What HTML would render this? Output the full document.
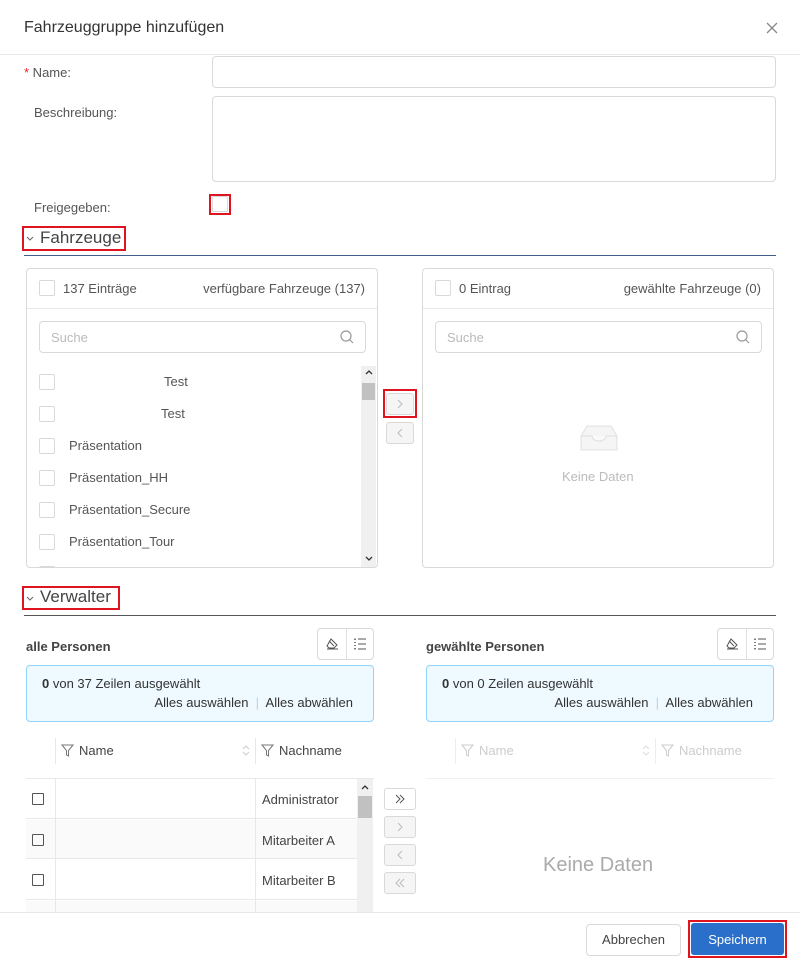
<!DOCTYPE html>
<html><head><meta charset="utf-8"><style>
*{box-sizing:border-box;margin:0;padding:0}
body{width:800px;height:964px;position:relative;background:#fff;font-family:"Liberation Sans",sans-serif;font-size:13px;color:#555;overflow:hidden}
.a{position:absolute}
.box{position:absolute;border:1px solid #d9d9d9;border-radius:4px;background:#fff}
.cb{position:absolute;width:16px;height:16px;border:1px solid #d9d9d9;border-radius:2px;background:#fff}
.red{position:absolute;border:2px solid #e0141e}
.btn{position:absolute;border:1px solid #d9d9d9;border-radius:3px;background:#f5f5f5}
.btn svg{position:absolute;left:50%;top:50%;transform:translate(-50%,-50%)}
.t{position:absolute;white-space:nowrap}
.info{position:absolute;background:#eefaff;border:1px solid #91d5ff;border-radius:4px}
.sq{position:absolute;width:12px;height:12px;border:1px solid #555;border-radius:1px}
</style></head><body>
<div class="t" style="left:24px;top:19px;font-size:16px;color:#333">Fahrzeuggruppe hinzufügen</div>
<svg class="a" style="left:766px;top:22px" width="12" height="12" viewBox="0 0 12 12"><path d="M1 1L11 11M11 1L1 11" stroke="#888" stroke-width="1.3"/></svg>
<div class="a" style="left:0;top:54px;width:800px;height:1px;background:#e8e8e8"></div>

<div class="t" style="left:24px;top:65px"><span style="color:#f5222d">*</span> Name:</div>
<div class="box" style="left:212px;top:56px;width:564px;height:32px"></div>
<div class="t" style="left:34px;top:105px">Beschreibung:</div>
<div class="box" style="left:212px;top:96px;width:564px;height:86px"></div>
<div class="t" style="left:34px;top:200px">Freigegeben:</div>
<div class="cb" style="left:212px;top:196px"></div>
<div class="red" style="left:209px;top:194px;width:22px;height:21px"></div>

<svg class="a" style="left:26px;top:236px" width="8" height="6" viewBox="0 0 8 6"><path d="M1 1L4 4L7 1" fill="none" stroke="#666"/></svg>
<div class="t" style="left:40px;top:228px;font-size:17px;color:#444">Fahrzeuge</div>
<div class="red" style="left:22px;top:226px;width:104px;height:25px"></div>
<div class="a" style="left:24px;top:255px;width:752px;height:1px;background:#3f5f8a"></div>

<!-- left transfer -->
<div class="box" style="left:26px;top:268px;width:352px;height:300px;overflow:hidden">
<div class="a" style="left:0;top:39px;width:352px;height:1px;background:#e8e8e8"></div>
<div class="cb" style="left:12px;top:11px"></div>
<div class="t" style="left:36px;top:12px">137 Einträge</div>
<div class="t" style="right:12px;top:12px">verfügbare Fahrzeuge (137)</div>
<div class="box" style="left:12px;top:52px;width:327px;height:32px"></div>
<div class="t" style="left:24px;top:61px;color:#bbb">Suche</div>
<svg class="a" style="left:313px;top:61px" width="14" height="14" viewBox="0 0 14 14"><circle cx="6" cy="6" r="5" fill="none" stroke="#999" stroke-width="1.2"/><line x1="9.5" y1="9.5" x2="13" y2="13" stroke="#999" stroke-width="1.2"/></svg>
<div class="cb" style="left:12px;top:105px"></div><div class="t" style="left:137px;top:105px">Test</div>
<div class="cb" style="left:12px;top:137px"></div><div class="t" style="left:134px;top:137px">Test</div>
<div class="cb" style="left:12px;top:169px"></div><div class="t" style="left:42px;top:169px">Präsentation</div>
<div class="cb" style="left:12px;top:201px"></div><div class="t" style="left:42px;top:201px">Präsentation_HH</div>
<div class="cb" style="left:12px;top:233px"></div><div class="t" style="left:42px;top:233px">Präsentation_Secure</div>
<div class="cb" style="left:12px;top:265px"></div><div class="t" style="left:42px;top:265px">Präsentation_Tour</div>
<div class="cb" style="left:12px;top:297px"></div>
<div class="a" style="left:334px;top:97px;width:15px;height:202px;background:#f0f0f0"></div>
<div class="a" style="left:335px;top:114px;width:13px;height:17px;background:#c1c1c1"></div>
<svg class="a" style="left:338px;top:100px" width="8" height="6" viewBox="0 0 8 6"><path d="M1 5L4 2L7 5" fill="none" stroke="#333" stroke-width="1.3"/></svg>
<svg class="a" style="left:338px;top:287px" width="8" height="6" viewBox="0 0 8 6"><path d="M1 1L4 4L7 1" fill="none" stroke="#333" stroke-width="1.3"/></svg>
</div>
<div class="btn" style="left:386px;top:393px;width:28px;height:22px"><svg width="6" height="10" viewBox="0 0 6 10"><path d="M1 1L5 5L1 9" fill="none" stroke="#bbb"/></svg></div>
<div class="red" style="left:383px;top:389px;width:34px;height:29px"></div>
<div class="btn" style="left:386px;top:422px;width:28px;height:22px"><svg width="6" height="10" viewBox="0 0 6 10"><path d="M5 1L1 5L5 9" fill="none" stroke="#bbb"/></svg></div>

<div class="box" style="left:422px;top:268px;width:352px;height:300px">
<div class="a" style="left:0;top:39px;width:350px;height:1px;background:#e8e8e8"></div>
<div class="cb" style="left:12px;top:11px"></div>
<div class="t" style="left:36px;top:12px">0 Eintrag</div>
<div class="t" style="right:12px;top:12px">gewählte Fahrzeuge (0)</div>
<div class="box" style="left:12px;top:52px;width:327px;height:32px"></div>
<div class="t" style="left:24px;top:61px;color:#bbb">Suche</div>
<svg class="a" style="left:313px;top:61px" width="14" height="14" viewBox="0 0 14 14"><circle cx="6" cy="6" r="5" fill="none" stroke="#999" stroke-width="1.2"/><line x1="9.5" y1="9.5" x2="13" y2="13" stroke="#999" stroke-width="1.2"/></svg>
<svg class="a" style="left:154px;top:154px" width="44" height="30" viewBox="0 0 44 30"><path d="M4 13 L10 3 H34 L40 13 V27 H4 Z" fill="#f5f5f5" stroke="#e0e0e0"/><path d="M4 13 H15 Q16 18 22 18 Q28 18 29 13 H40" fill="#fafafa" stroke="#e0e0e0"/></svg>
<div class="t" style="left:139px;top:200px;color:#bbb">Keine Daten</div>
</div>

<svg class="a" style="left:26px;top:596px" width="8" height="6" viewBox="0 0 8 6"><path d="M1 1L4 4L7 1" fill="none" stroke="#666"/></svg>
<div class="t" style="left:40px;top:587px;font-size:17px;color:#444">Verwalter</div>
<div class="red" style="left:22px;top:586px;width:98px;height:24px"></div>
<div class="a" style="left:24px;top:615px;width:752px;height:1px;background:#555"></div>

<!-- left persons -->
<div class="t" style="left:26px;top:639px;font-weight:bold;color:#444">alle Personen</div>
<div class="box" style="left:317px;top:628px;width:57px;height:32px"><div class="a" style="left:28px;top:0;width:1px;height:30px;background:#e0e0e0"></div>
<svg class="a" style="left:8px;top:9px" width="13" height="12" viewBox="0 0 13 12"><path d="M5 1L11 7L8 10H3L1 8Z M1 11H12" fill="none" stroke="#555"/><path d="M3 3L8 8" stroke="#555"/></svg>
<svg class="a" style="left:36px;top:9px" width="13" height="12" viewBox="0 0 13 12"><path d="M4 1H12M4 6H12M4 11H12" stroke="#555"/><path d="M1 0.5V2M1 4V5M1 7V8M1 10V11.5" stroke="#555" stroke-width="1.5"/></svg></div>
<div class="info" style="left:26px;top:665px;width:348px;height:57px"><div class="t" style="left:15px;top:10px;color:#333"><b>0</b> von 37 Zeilen ausgewählt</div><div class="t" style="right:20px;top:29px;color:#333">Alles auswählen <span style="color:#ccc">&nbsp;|&nbsp;</span> Alles abwählen</div></div>
<div class="a" style="left:55px;top:738px;width:1px;height:26px;background:#e8e8e8"></div>
<div class="a" style="left:255px;top:738px;width:1px;height:26px;background:#e8e8e8"></div>
<svg class="a" style="left:61px;top:744px" width="13" height="13" viewBox="0 0 13 13"><path d="M1 1H12L7.5 6.5V12L5.5 11V6.5Z" fill="none" stroke="#777"/></svg>
<div class="t" style="left:79px;top:743px;color:#444">Name</div>
<svg class="a" style="left:242px;top:744px" width="8" height="13" viewBox="0 0 8 13"><path d="M1 5L4 2L7 5M1 8L4 11L7 8" fill="none" stroke="#ccc"/></svg>
<svg class="a" style="left:261px;top:744px" width="13" height="13" viewBox="0 0 13 13"><path d="M1 1H12L7.5 6.5V12L5.5 11V6.5Z" fill="none" stroke="#777"/></svg>
<div class="t" style="left:279px;top:743px;color:#444">Nachname</div>
<div class="a" style="left:26px;top:778px;width:348px;height:1px;background:#e8e8e8"></div>
<div class="a" style="left:26px;top:779px;width:331px;height:133px;overflow:hidden">
<div class="a" style="left:0;top:0;width:331px;height:40px;background:#fff;border-bottom:1px solid #e8e8e8"></div>
<div class="a" style="left:0;top:41px;width:331px;height:39px;background:#fafafa;border-bottom:1px solid #e8e8e8"></div>
<div class="a" style="left:0;top:81px;width:331px;height:40px;background:#fff;border-bottom:1px solid #e8e8e8"></div>
<div class="a" style="left:0;top:122px;width:331px;height:40px;background:#fafafa"></div>
<div class="a" style="left:29px;top:0;width:1px;height:140px;background:#e8e8e8"></div>
<div class="a" style="left:229px;top:0;width:1px;height:140px;background:#e8e8e8"></div>
<div class="sq" style="left:6px;top:14px"></div><div class="t" style="left:236px;top:13px;color:#444">Administrator</div>
<div class="sq" style="left:6px;top:55px"></div><div class="t" style="left:236px;top:54px;color:#444">Mitarbeiter A</div>
<div class="sq" style="left:6px;top:95px"></div><div class="t" style="left:236px;top:94px;color:#444">Mitarbeiter B</div>
</div>
<div class="a" style="left:357px;top:779px;width:16px;height:133px;background:#f0f0f0"></div>
<div class="a" style="left:358px;top:796px;width:14px;height:22px;background:#c1c1c1"></div>
<svg class="a" style="left:361px;top:784px" width="8" height="6" viewBox="0 0 8 6"><path d="M1 5L4 2L7 5" fill="none" stroke="#333" stroke-width="1.3"/></svg>
<div class="btn" style="left:384px;top:788px;width:32px;height:22px;background:#fff"><svg width="10" height="10" viewBox="0 0 10 10"><path d="M1 1L5 5L1 9M5 1L9 5L5 9" fill="none" stroke="#555"/></svg></div>
<div class="btn" style="left:384px;top:816px;width:32px;height:22px"><svg width="6" height="10" viewBox="0 0 6 10"><path d="M1 1L5 5L1 9" fill="none" stroke="#bbb"/></svg></div>
<div class="btn" style="left:384px;top:844px;width:32px;height:22px"><svg width="6" height="10" viewBox="0 0 6 10"><path d="M5 1L1 5L5 9" fill="none" stroke="#bbb"/></svg></div>
<div class="btn" style="left:384px;top:872px;width:32px;height:22px"><svg width="10" height="10" viewBox="0 0 10 10"><path d="M5 1L1 5L5 9M9 1L5 5L9 9" fill="none" stroke="#bbb"/></svg></div>

<!-- right persons -->
<div class="t" style="left:426px;top:639px;font-weight:bold;color:#444">gewählte Personen</div>
<div class="box" style="left:717px;top:628px;width:57px;height:32px"><div class="a" style="left:28px;top:0;width:1px;height:30px;background:#e0e0e0"></div>
<svg class="a" style="left:8px;top:9px" width="13" height="12" viewBox="0 0 13 12"><path d="M5 1L11 7L8 10H3L1 8Z M1 11H12" fill="none" stroke="#555"/><path d="M3 3L8 8" stroke="#555"/></svg>
<svg class="a" style="left:36px;top:9px" width="13" height="12" viewBox="0 0 13 12"><path d="M4 1H12M4 6H12M4 11H12" stroke="#555"/><path d="M1 0.5V2M1 4V5M1 7V8M1 10V11.5" stroke="#555" stroke-width="1.5"/></svg></div>
<div class="info" style="left:426px;top:665px;width:348px;height:57px"><div class="t" style="left:15px;top:10px;color:#333"><b>0</b> von 0 Zeilen ausgewählt</div><div class="t" style="right:20px;top:29px;color:#333">Alles auswählen <span style="color:#ccc">&nbsp;|&nbsp;</span> Alles abwählen</div></div>
<div class="a" style="left:455px;top:738px;width:1px;height:26px;background:#eee"></div>
<div class="a" style="left:655px;top:738px;width:1px;height:26px;background:#eee"></div>
<svg class="a" style="left:461px;top:744px" width="13" height="13" viewBox="0 0 13 13"><path d="M1 1H12L7.5 6.5V12L5.5 11V6.5Z" fill="none" stroke="#ccc"/></svg>
<div class="t" style="left:479px;top:743px;color:#ccc">Name</div>
<svg class="a" style="left:642px;top:744px" width="8" height="13" viewBox="0 0 8 13"><path d="M1 5L4 2L7 5M1 8L4 11L7 8" fill="none" stroke="#ddd"/></svg>
<svg class="a" style="left:661px;top:744px" width="13" height="13" viewBox="0 0 13 13"><path d="M1 1H12L7.5 6.5V12L5.5 11V6.5Z" fill="none" stroke="#ccc"/></svg>
<div class="t" style="left:679px;top:743px;color:#ccc">Nachname</div>
<div class="a" style="left:426px;top:778px;width:348px;height:1px;background:#f0f0f0"></div>
<div class="t" style="left:543px;top:854px;font-size:20px;color:#aaa">Keine Daten</div>

<!-- footer -->
<div class="a" style="left:0;top:912px;width:800px;height:1px;background:#e8e8e8"></div>
<div class="box" style="left:586px;top:924px;width:95px;height:32px;text-align:center;line-height:30px;color:#444">Abbrechen</div>
<div class="a" style="left:691px;top:923px;width:93px;height:32px;background:#2a6fc9;border-radius:3px;color:#fff;text-align:center;line-height:33px">Speichern</div>
<div class="red" style="left:688px;top:920px;width:99px;height:38px"></div>
</body></html>
